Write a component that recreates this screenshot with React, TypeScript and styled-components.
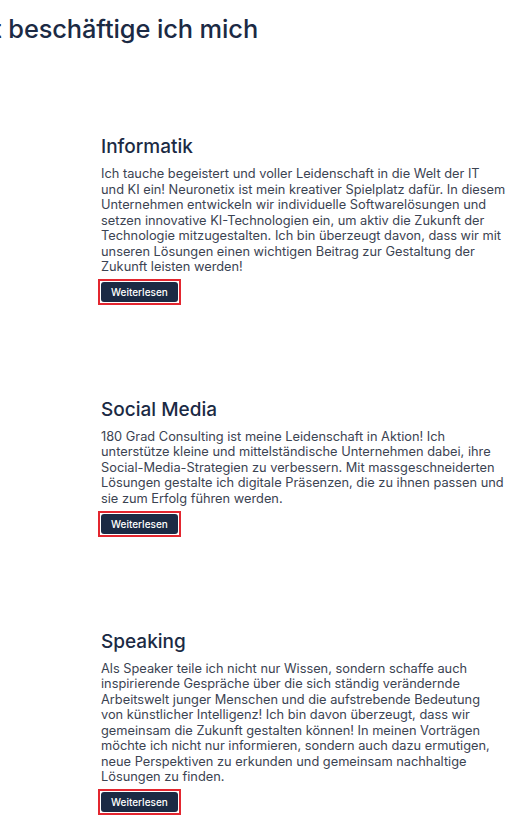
import * as React from 'react';
import styled, { createGlobalStyle } from 'styled-components';

const palette = {
  navy: '#1b2a44',
  text: '#3b4352',
  focus: '#e3262f',
  white: '#ffffff',
};

type Topic = {
  title: string;
  lines: string[];
};

const topics: Topic[] = [
  {
    title: 'Informatik',
    lines: [
      'Ich tauche begeistert und voller Leidenschaft in die Welt der IT',
      'und KI ein! Neuronetix ist mein kreativer Spielplatz dafür. In diesem',
      'Unternehmen entwickeln wir individuelle Softwarelösungen und',
      'setzen innovative KI-Technologien ein, um aktiv die Zukunft der',
      'Technologie mitzugestalten. Ich bin überzeugt davon, dass wir mit',
      'unseren Lösungen einen wichtigen Beitrag zur Gestaltung der',
      'Zukunft leisten werden!',
    ],
  },
  {
    title: 'Social Media',
    lines: [
      '180 Grad Consulting ist meine Leidenschaft in Aktion! Ich',
      'unterstütze kleine und mittelständische Unternehmen dabei, ihre',
      'Social-Media-Strategien zu verbessern. Mit massgeschneiderten',
      'Lösungen gestalte ich digitale Präsenzen, die zu ihnen passen und',
      'sie zum Erfolg führen werden.',
    ],
  },
  {
    title: 'Speaking',
    lines: [
      'Als Speaker teile ich nicht nur Wissen, sondern schaffe auch',
      'inspirierende Gespräche über die sich ständig verändernde',
      'Arbeitswelt junger Menschen und die aufstrebende Bedeutung',
      'von künstlicher Intelligenz! Ich bin davon überzeugt, dass wir',
      'gemeinsam die Zukunft gestalten können! In meinen Vorträgen',
      'möchte ich nicht nur informieren, sondern auch dazu ermutigen,',
      'neue Perspektiven zu erkunden und gemeinsam nachhaltige',
      'Lösungen zu finden.',
    ],
  },
];

function TopicCard({ topic }: { topic: Topic }) {
  return (
    <Card>
      <h3>{topic.title}</h3>
      <p>
        {topic.lines.map((line) => (
          <span key={line}>{line}</span>
        ))}
      </p>
      <FocusFrame>
        <ReadMore type="button">Weiterlesen</ReadMore>
      </FocusFrame>
    </Card>
  );
}

function App() {
  return (
    <>
      <GlobalStyle />
      <Page>
        <Heading>Womit beschäftige ich mich</Heading>
        <List>
          {topics.map((topic) => (
            <TopicCard key={topic.title} topic={topic} />
          ))}
        </List>
      </Page>
    </>
  );
}

const GlobalStyle = createGlobalStyle`
  html, body {
    margin: 0;
    padding: 0;
    background: ${palette.white};
    overflow-x: hidden;
  }
  body {
    font-family: Inter, "Noto Sans", "Liberation Sans", sans-serif;
    color: ${palette.text};
  }
`;

const Page = styled.main`
  display: flex;
  flex-direction: column;
  width: 514px;
  overflow: hidden;
`;

const Heading = styled.h2`
  margin: 12px 0 0 -75px;
  font-size: 25.4px;
  line-height: 34px;
  font-weight: 500;
  letter-spacing: -0.1px;
  white-space: nowrap;
  color: ${palette.navy};
`;

const List = styled.div`
  display: flex;
  flex-direction: column;
  gap: 93px;
  padding: 89px 6px 0 101px;
`;

const Card = styled.section`
  display: flex;
  flex-direction: column;
  align-items: flex-start;

  h3 {
    margin: 0 0 7px;
    font-size: 19px;
    line-height: 24px;
    font-weight: 500;
    color: ${palette.navy};
  }

  p {
    display: flex;
    flex-direction: column;
    margin: 0 0 4px;
    font-size: 12.8px;
    line-height: 15.55px;
    color: ${palette.text};
  }

  p span {
    white-space: nowrap;
  }
`;

const FocusFrame = styled.span`
  display: inline-flex;
  margin-left: -3px;
  padding: 1px;
  border: 2px solid ${palette.focus};
`;

const ReadMore = styled.button`
  height: 20px;
  padding: 0 10px;
  border: none;
  border-radius: 3px;
  background: ${palette.navy};
  color: ${palette.white};
  font-family: inherit;
  font-size: 10px;
  font-weight: 500;
  cursor: pointer;
`;

export default App;
